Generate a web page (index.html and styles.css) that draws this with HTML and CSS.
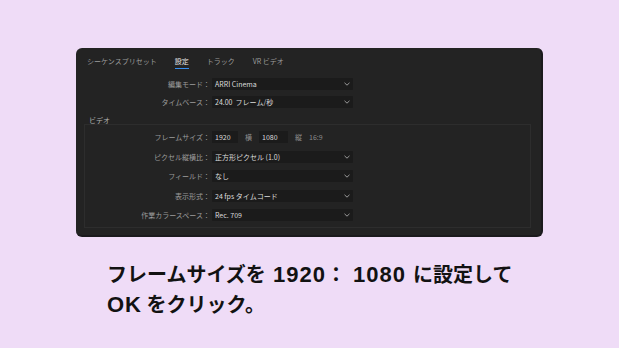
FILE: index.html
```html
<!DOCTYPE html>
<html>
<head>
  <title>シーケンス設定</title>
  <link rel="stylesheet" href="styles.css">
</head>
<body>
  <div class="panel">
    <div class="tabs">
      <span class="tab">シーケンスプリセット</span>
      <span class="tab active">設定</span>
      <span class="tab">トラック</span>
      <span class="tab">VR ビデオ</span>
    </div>

    <div class="fields top">
      <span class="label">編集モード：</span>
      <div class="select"><span>ARRI Cinema</span><svg class="chev" width="6" height="4" viewBox="0 0 6 4"><path d="M0.5 0.8 L3 3.2 L5.5 0.8" /></svg></div>

      <span class="label">タイムベース：</span>
      <div class="select"><span>24.00 &nbsp;フレーム/秒</span><svg class="chev" width="6" height="4" viewBox="0 0 6 4"><path d="M0.5 0.8 L3 3.2 L5.5 0.8" /></svg></div>
    </div>

    <div class="group-title">ビデオ</div>
    <div class="group">
      <div class="fields">
        <span class="label">フレームサイズ：</span>
        <div class="size">
          <span class="box w1">1920</span>
          <span class="unit">横</span>
          <span class="box w2">1080</span>
          <span class="unit">縦</span>
          <span class="ratio">16:9</span>
        </div>

        <span class="label">ピクセル縦横比：</span>
        <div class="select"><span>正方形ピクセル (1.0)</span><svg class="chev" width="6" height="4" viewBox="0 0 6 4"><path d="M0.5 0.8 L3 3.2 L5.5 0.8" /></svg></div>

        <span class="label">フィールド：</span>
        <div class="select"><span>なし</span><svg class="chev" width="6" height="4" viewBox="0 0 6 4"><path d="M0.5 0.8 L3 3.2 L5.5 0.8" /></svg></div>

        <span class="label">表示形式：</span>
        <div class="select"><span>24 fps タイムコード</span><svg class="chev" width="6" height="4" viewBox="0 0 6 4"><path d="M0.5 0.8 L3 3.2 L5.5 0.8" /></svg></div>

        <span class="label">作業カラースペース：</span>
        <div class="select"><span>Rec. 709</span><svg class="chev" width="6" height="4" viewBox="0 0 6 4"><path d="M0.5 0.8 L3 3.2 L5.5 0.8" /></svg></div>
      </div>
    </div>
  </div>

  <p class="caption">フレームサイズを<span class="num"> 1920</span>：<span class="num"> 1080 </span>に設定して<br><span class="num">OK</span> をクリック。</p>
</body>
</html>
```

FILE: styles.css
```css
body {
  margin: 0;
  background-color: #efdcf7;
  font-family: "Noto Sans CJK JP", "Noto Sans", sans-serif;
}

.panel {
  width: 465px;
  margin: 48px 0 0 76px;
  padding: 8px 0 7px;
  background-color: #232323;
  border-right: 2px solid #1b1a1d;
  border-bottom: 2px solid #1b1a1d;
  border-radius: 6px;
  font-size: 7px;
  color: #9c9c9c;
}

.tabs {
  display: flex;
  gap: 18px;
  padding-left: 11px;
}

.tab {
  line-height: 10px;
  padding-bottom: 2px;
}

.tab.active {
  color: #e6e6e6;
  border-bottom: 1.5px solid #378ef0;
}

.fields {
  display: grid;
  grid-template-columns: 126px 141px;
  column-gap: 2px;
  row-gap: 7.5px;
  align-items: center;
}

.fields.top {
  margin: 8.5px 0 0 8px;
  row-gap: 6.5px;
}

.label {
  text-align: right;
  line-height: 12px;
  white-space: nowrap;
}

.select {
  display: flex;
  justify-content: space-between;
  align-items: center;
  height: 12px;
  padding: 0 3px;
  background-color: #1b1b1b;
  border-radius: 1px;
  color: #dcdcdc;
}

.chev {
  fill: none;
  stroke: #a8a8a8;
  stroke-width: 0.9;
}

.group-title {
  margin: 8px 0 0 13px;
  line-height: 8px;
  color: #b4b4b4;
}

.group {
  margin: 0 10px 0 8px;
  padding: 6px 0 6px;
  border: 1px solid #2d2d2d;
}

.group .fields {
  margin-left: -1px;
}

.size {
  display: flex;
  align-items: center;
  gap: 7px;
}

.box {
  height: 12px;
  line-height: 12px;
  padding-left: 3px;
  background-color: #1b1b1b;
  color: #dcdcdc;
  box-sizing: border-box;
}

.w1 {
  width: 26px;
}

.w2 {
  width: 29px;
}

.unit {
  color: #8e8e8e;
}

.ratio {
  color: #8a8a8a;
}

.caption {
  margin: 22px 0 0 107px;
  font-size: 20px;
  font-weight: bold;
  line-height: 29px;
  color: #121212;
}

.num {
  font-family: "Liberation Sans", Arial, sans-serif;
  font-size: 22px;
  letter-spacing: 1px;
}
```
